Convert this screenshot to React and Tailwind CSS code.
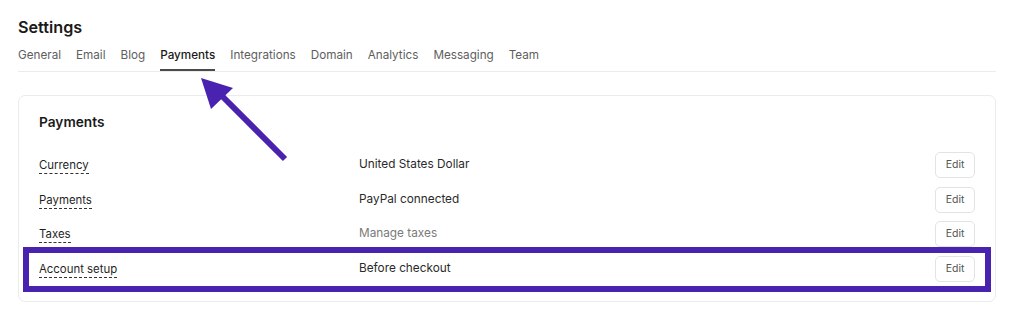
import React from 'react';

const tabs = ['General', 'Email', 'Blog', 'Payments', 'Integrations', 'Domain', 'Analytics', 'Messaging', 'Team'];

const rows = [
  { label: 'Currency', value: 'United States Dollar' },
  { label: 'Payments', value: 'PayPal connected' },
  { label: 'Taxes', value: 'Manage taxes', muted: true },
  { label: 'Account setup', value: 'Before checkout', highlight: true },
];

const App = () => {
  return (
    <div className="relative w-[1024px] h-[326px] bg-white overflow-hidden font-['Inter',sans-serif] text-[#1f1f1f]">
      <div className="px-[18px] pt-[16px] w-[996px] box-content">
        <h1 className="text-[16.2px] leading-[22px] font-semibold text-[#1a1a1a]">Settings</h1>

        {/* tabs */}
        <div className="mt-[6px] flex gap-[15px] border-b border-[#ececec] w-[978px]">
          {tabs.map((t) => (
            <div
              key={t}
              className={`h-[27px] pt-[1px] text-[11.7px] leading-[20px] ${t === 'Payments' ? 'font-medium text-[#1a1a1a] border-b-2 border-[#4b4b4b] -mb-[1px]' : 'text-[#5e5e5e]'}`}
            >
              {t}
            </div>
          ))}
        </div>

        {/* card */}
        <div className="mt-[23px] w-[978px] border border-[#ebebeb] rounded-[7px] px-5 pt-[15px] pb-[15px]">
          <h2 className="text-[13.7px] leading-[22px] font-semibold text-[#1a1a1a]">Payments</h2>
          <div className="mt-[14.5px] flex flex-col">
            {rows.map((r) => (
              <div key={r.label} className="relative h-[34.7px] flex items-center">
                {r.highlight && (
                  <span className="absolute -left-4 -right-4 -top-[5px] -bottom-[6px] border-[6px] border-[#4a22b0] pointer-events-none" />
                )}
                <div className="w-[320px] text-[11.4px] leading-[18px]">
                  <span className="border-b border-dashed border-[#333] pb-[1px]">{r.label}</span>
                </div>
                <div className={`flex-1 text-[11.8px] ${r.muted ? 'text-[#7a7a7a]' : 'text-[#2a2a2a]'}`}>{r.value}</div>
                <button className="w-[40px] h-[26px] rounded-[5px] border border-[#e3e3e3] text-[10.5px] text-[#555] bg-white">Edit</button>
              </div>
            ))}
          </div>
        </div>
      </div>

      {/* arrow annotation */}
      <svg className="absolute left-0 top-0 pointer-events-none" width="1024" height="326">
        <line x1="285" y1="159" x2="218" y2="92" stroke="#4a22b0" strokeWidth="6" />
        <polygon points="201,78 233,88 211,109" fill="#4a22b0" />
      </svg>
    </div>
  );
};

export default App;
